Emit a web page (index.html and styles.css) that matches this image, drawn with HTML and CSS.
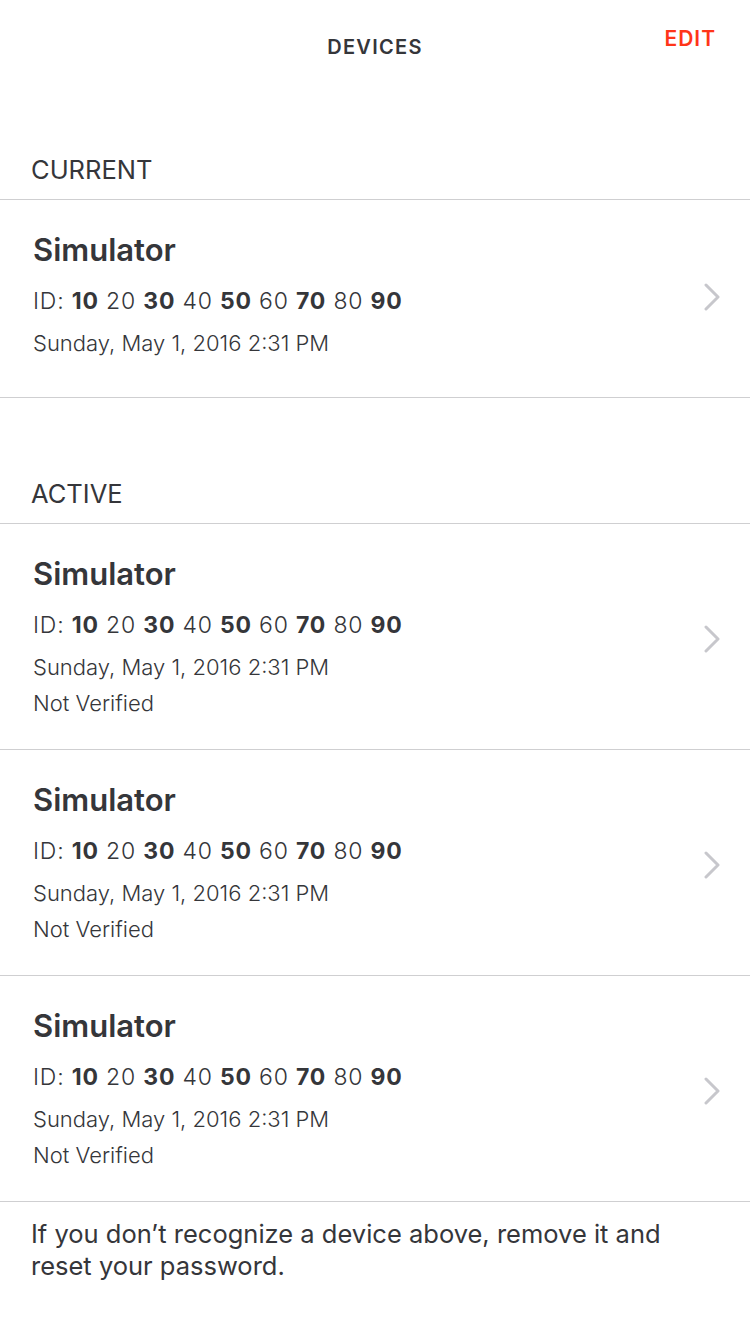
FILE: index.html
```html
<!DOCTYPE html>
<html>
<head>
<meta charset="utf-8">
<link rel="stylesheet" href="styles.css">
</head>
<body>
<div class="screen">
  <header class="nav">
    <div class="nav-title">DEVICES</div>
    <div class="nav-edit">EDIT</div>
  </header>

  <div class="section-header section-header--first">CURRENT</div>
  <ul class="list">
    <li class="cell cell--current">
      <div class="cell-body">
        <div class="cell-title">Simulator</div>
        <div class="cell-id">ID: <b>10</b> 20 <b>30</b> 40 <b>50</b> 60 <b>70</b> 80 <b>90</b></div>
        <div class="cell-line">Sunday, May 1, 2016 2:31 PM</div>
      </div>
      <svg class="chevron" viewBox="0 0 16 28" width="16" height="28"><path d="M2 2 L14 14 L2 26" fill="none" stroke="#c7c7cc" stroke-width="3" stroke-linecap="round" stroke-linejoin="round"/></svg>
    </li>
  </ul>

  <div class="section-header">ACTIVE</div>
  <ul class="list">
    <li class="cell">
      <div class="cell-body">
        <div class="cell-title">Simulator</div>
        <div class="cell-id">ID: <b>10</b> 20 <b>30</b> 40 <b>50</b> 60 <b>70</b> 80 <b>90</b></div>
        <div class="cell-line">Sunday, May 1, 2016 2:31 PM</div>
        <div class="cell-line">Not Verified</div>
      </div>
      <svg class="chevron" viewBox="0 0 16 28" width="16" height="28"><path d="M2 2 L14 14 L2 26" fill="none" stroke="#c7c7cc" stroke-width="3" stroke-linecap="round" stroke-linejoin="round"/></svg>
    </li>
    <li class="cell">
      <div class="cell-body">
        <div class="cell-title">Simulator</div>
        <div class="cell-id">ID: <b>10</b> 20 <b>30</b> 40 <b>50</b> 60 <b>70</b> 80 <b>90</b></div>
        <div class="cell-line">Sunday, May 1, 2016 2:31 PM</div>
        <div class="cell-line">Not Verified</div>
      </div>
      <svg class="chevron" viewBox="0 0 16 28" width="16" height="28"><path d="M2 2 L14 14 L2 26" fill="none" stroke="#c7c7cc" stroke-width="3" stroke-linecap="round" stroke-linejoin="round"/></svg>
    </li>
    <li class="cell">
      <div class="cell-body">
        <div class="cell-title">Simulator</div>
        <div class="cell-id">ID: <b>10</b> 20 <b>30</b> 40 <b>50</b> 60 <b>70</b> 80 <b>90</b></div>
        <div class="cell-line">Sunday, May 1, 2016 2:31 PM</div>
        <div class="cell-line">Not Verified</div>
      </div>
      <svg class="chevron" viewBox="0 0 16 28" width="16" height="28"><path d="M2 2 L14 14 L2 26" fill="none" stroke="#c7c7cc" stroke-width="3" stroke-linecap="round" stroke-linejoin="round"/></svg>
    </li>
  </ul>

  <p class="footer">If you don’t recognize a device above, remove it and reset your password.</p>
</div>
</body>
</html>
```

FILE: styles.css
```css
* { box-sizing: border-box; }
html, body { margin: 0; padding: 0; background: #fff; }
body {
  font-family: Inter, "Open Sans", "Liberation Sans", sans-serif;
  color: #35363a;
  width: 750px;
}
.screen { width: 750px; }

.nav {
  position: relative;
  height: 89px;
  display: flex;
  justify-content: center;
  align-items: flex-start;
}
.nav-title {
  margin-top: 34px;
  font-size: 20px;
  font-weight: 600;
  letter-spacing: 1.3px;
  line-height: 26px;
  color: #35363a;
}
.nav-edit {
  position: absolute;
  right: 34px;
  top: 26px;
  font-size: 21px;
  font-weight: 600;
  letter-spacing: 1px;
  line-height: 26px;
  color: #ff3519;
}

.section-header {
  height: 126px;
  display: flex;
  align-items: flex-end;
  padding: 0 31px 14px;
  font-size: 25.5px;
  line-height: 30px;
  font-weight: 400;
  color: #35363a;
  border-bottom: 1px solid #cfcfd1;
}
.section-header--first { height: 111px; }

.list { list-style: none; margin: 0; padding: 0; }
.cell {
  display: flex;
  align-items: center;
  padding: 32px 30px 28px 33px;
  border-bottom: 1px solid #cfcfd1;
}
.cell--current { padding-bottom: 36px; }
.cell-body { flex: 1; }
.cell-title {
  font-size: 31px;
  line-height: 36px;
  font-weight: 600;
  color: #35363a;
}
.cell-id {
  margin-top: 15px;
  font-size: 23px;
  line-height: 36px;
  font-weight: 300;
  letter-spacing: 0.8px;
}
.cell-id b { font-weight: 700; }
.cell-line {
  font-size: 22px;
  line-height: 36px;
  font-weight: 300;
}
.cell-id + .cell-line { margin-top: 6px; }
.chevron { flex: none; width: 16px; height: 28px; }

.footer {
  margin: 0;
  padding: 16px 60px 0 31px;
  font-size: 25.5px;
  line-height: 32px;
  font-weight: 400;
  color: #35363a;
}
```
